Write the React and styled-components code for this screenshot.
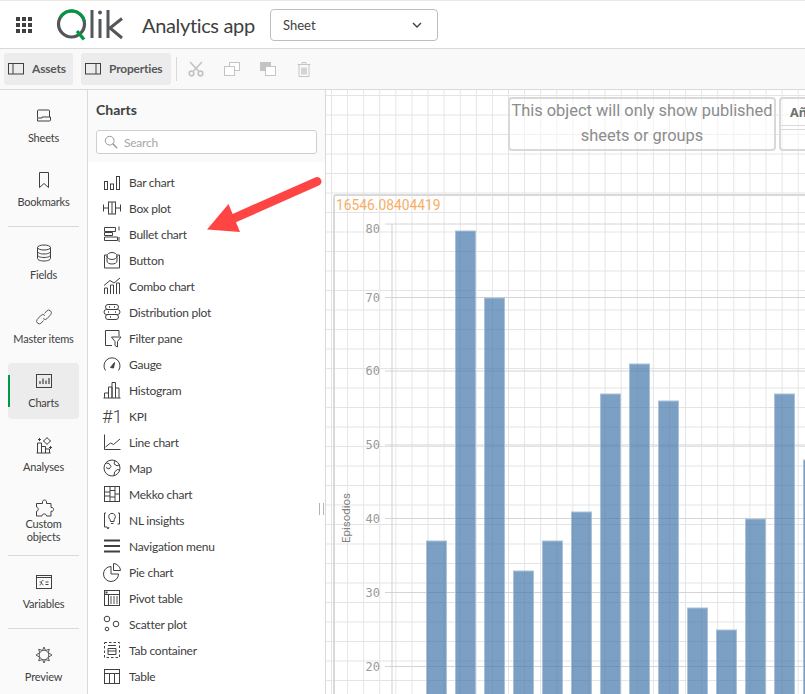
import styled, { createGlobalStyle } from "styled-components"

const GlobalStyle = createGlobalStyle`
    html, body {
        margin: 0;
        padding: 0;
        background: #fff;
    }
    * {
        box-sizing: border-box;
    }
`

const Ico = ({ children, size = 20, view = 20 }) => (
    <svg width={size} height={size} viewBox={`0 0 ${view} ${view}`} fill="none" stroke="#404040" strokeWidth="1">
        {children}
    </svg>
)

const railIcons = {
    sheets: <><path d="M3.5 12V5a1 1 0 0 1 1-1h10a1 1 0 0 1 1 1v6" /><path d="M3.5 15V13a1 1 0 0 1 1-1H8v-1h8.500v3a1 1 0 0 1-1 1H3.500z" /></>,
    bookmarks: <path d="M5.500 2.500h9v15l-4.500-4-4.500 4z" />,
    fields: <><ellipse cx="10" cy="4.500" rx="6.500" ry="2.500" /><path d="M3.500 4.500v11c0 1.400 2.900 2.500 6.500 2.500s6.500-1.100 6.500-2.500v-11" /><path d="M3.500 8.500c0 1.400 2.900 2.500 6.500 2.500s6.500-1.100 6.500-2.500M3.500 12c0 1.400 2.900 2.500 6.500 2.500s6.500-1.100 6.500-2.500" /></>,
    master: <><path d="M10.500 6.500l2.300-2.600a2.700 2.700 0 0 1 4 3.600l-3.600 4a2.700 2.700 0 0 1-4 0" stroke="#595959" /><path d="M9.500 13.500l-2.300 2.600a2.700 2.700 0 0 1-4-3.600l3.600-4a2.700 2.700 0 0 1 4 0" stroke="#595959" /></>,
    charts: <><rect x="2.500" y="3.500" width="15" height="13" /><path d="M6 13V10M9 13V7.500M12 13V9.500M15 13V7" strokeWidth="1.200" /></>,
    analyses: <><path d="M3.500 18V8h4v10M7.500 18v-6.500h4V18M11.500 18v-4h4v4M2.500 18h14" /><path d="M13 2.500l1.700 2 2 1.500-2 1.500L13 9.500l-1.700-2-2-1.500 2-1.500zM5.500 3v3M4 4.500h3M16.500 11v3M15 12.500h3" /></>,
    custom: <path d="M8.500 3.800c0-2.400 4-2.400 4 0v1.700h4.500v4h1c2 0 2 3.800 0 3.800h-1V18h-4.500c0-2.700-4.500-2.700-4.500 0H2.500v-4.700c2.300 0 2.300-4.300 0-4.300V5.500h6z" />,
    variables: <><rect x="2.500" y="3.500" width="15" height="13" /><path d="M2.500 5.500h15M11.500 10h3M11.500 12.500h3" /><path d="M5.500 13c1 .5 1.500-.5 2-3 .3-1.300 1-2 2-1.500M5.500 10h1.500c.6 0 .8 3 2.500 3" strokeWidth=".8" /></>,
    preview: <><circle cx="10" cy="10" r="4.800" stroke="#595959" /><path d="M10 2l1.500 3.500 3.800-1.300-1 3.500L18 10l-3.700 2.300 1 3.500-3.800-1.300L10 18l-1.500-3.500-3.800 1.300 1-3.500L2 10l3.700-2.300-1-3.500 3.800 1.300z" stroke="#595959" /></>,
}

const listIcons = {
    bar: <><rect x="2.500" y="9.500" width="3" height="8" /><rect x="8.500" y="12" width="3" height="5.500" /><rect x="14.500" y="4.500" width="3" height="13" /></>,
    box: <><rect x="6.500" y="4" width="7" height="12" /><path d="M10 4v12M1.500 6.500v7M1.500 10h5M18.500 6.500v7M13.500 10h5" /></>,
    bullet: <><path d="M2.500 3.500h11v4h-11zM2.500 8.500h8v3h-8zM2.500 13h13v3.500h-13zM17 2.500v4M17 13v5" /></>,
    button: <><path d="M5 5H2.500v13h15V5H15" /><ellipse cx="10" cy="6" rx="5" ry="3.500" /><path d="M5 6v5c0 1.800 2.200 3 5 3s5-1.200 5-3V6" /></>,
    combo: <><path d="M2.500 18v-6h3v6M8.500 18v-9h3v9M14.500 18V7h3v11" /><path d="M2 9.500l6-5 4 2.500 6-5" /></>,
    distribution: <><rect x="3.500" y="2.500" width="13" height="5" rx="2.500" /><rect x="2" y="7.500" width="16" height="5" rx="2.500" /><rect x="3.500" y="12.500" width="13" height="5" rx="2.500" /><path d="M7 5h1M12 5h1M6 10h1M13 10h1M8 15h1" strokeWidth="1.600" /></>,
    filter: <><path d="M17 8V2.500H3.500v15H10" /><path d="M9.500 9h9.500l-3.500 4.500V19l-2.500-1.500v-4z" /></>,
    gauge: <><path d="M3.500 16.500A8 8 0 1 1 16.500 16.500" /><path d="M8.500 13.500l4-5-1 5.500z" fill="#404040" /></>,
    histogram: <><path d="M2.500 18v-5h4v5M6.500 18V7h3.500v11M10 18V2.500h3.500V18M13.500 18V8h3.500v10M1.500 18h17" /></>,
    line: <><path d="M2.500 2.500v15h16" /><path d="M3.500 15l5-4 3 1.500 6.500-5.500" /></>,
    map: <><circle cx="10" cy="10" r="8" /><path d="M4 5l3 .5 2 3-2 2.500-3-1.500M13 2.800l-1 3 3 2 2.500-1M12 18l.5-4 3-2.500 2 .5" /></>,
    mekko: <><rect x="2.500" y="2.500" width="15" height="15" /><path d="M8 2.500v15M13 2.500v15M2.500 8h5.500M2.500 12h5.500M8 6.500h5M8 13h5M13 10h4.500" /></>,
    nl: <><path d="M4 3H2.500v14H5l1 2 1-2M16 3h1.500v11h-2" /><path d="M7 8a3.300 3.300 0 1 1 6 0c-.7 1-1 2-1 3.500H8.500C8.500 10 7.700 9 7 8z" /><path d="M9 13.500h2.500" /></>,
    nav: <path d="M2 4.500h16M2 10h16M2 15.500h16" strokeWidth="2" />,
    pie: <><path d="M9 4.500a7.500 7.500 0 1 0 7.500 7.500H9z" /><path d="M11.500 1.500a7.500 7.500 0 0 1 7 7h-7z" /></>,
    pivot: <><rect x="2.500" y="2.500" width="15" height="15" /><path d="M2.500 6.500h15M6.500 6.500v11" /><path d="M9 8v8M12 8v8M15 8v8" strokeWidth="1.200" stroke="#6f6f6f" /><rect x="3.500" y="3.500" width="2" height="2" fill="#404040" stroke="none" /></>,
    scatter: <><circle cx="5" cy="5" r="2.800" /><circle cx="14" cy="10" r="2.800" /><circle cx="5" cy="15" r="1.800" /></>,
    tab: <><path d="M2.500 2.500h15v15h-15z" strokeDasharray="2.500 2" /><path d="M6 8.500h8v6H6zM6 5.500h8M6 11h8" /></>,
    table: <><rect x="2.500" y="3.500" width="15" height="14" /><path d="M2.500 7.500h15M7.500 7.500v10M12.500 7.500v10" /></>,
}

const railItems = [
    { label: "Sheets", icon: "sheets" },
    { label: "Bookmarks", icon: "bookmarks" },
    { divider: true },
    { label: "Fields", icon: "fields" },
    { label: "Master items", icon: "master" },
    { label: "Charts", icon: "charts", active: true },
    { label: "Analyses", icon: "analyses" },
    { label: "Custom objects", icon: "custom", tight: true },
    { divider: true },
    { label: "Variables", icon: "variables" },
    { divider: true },
    { label: "Preview", icon: "preview" },
]

const chartItems = [
    ["Bar chart", "bar"], ["Box plot", "box"], ["Bullet chart", "bullet"], ["Button", "button"],
    ["Combo chart", "combo"], ["Distribution plot", "distribution"], ["Filter pane", "filter"],
    ["Gauge", "gauge"], ["Histogram", "histogram"], ["KPI", "kpi"], ["Line chart", "line"],
    ["Map", "map"], ["Mekko chart", "mekko"], ["NL insights", "nl"], ["Navigation menu", "nav"],
    ["Pie chart", "pie"], ["Pivot table", "pivot"], ["Scatter plot", "scatter"],
    ["Tab container", "tab"], ["Table", "table"],
]

// the top label sits under its line, the rest are centred on it
const ticks = [[80, 224, 9], [70, 297.500, 4], [60, 371, 4], [50, 445, 4], [40, 518.500, 4], [30, 592.500, 4], [20, 666.500, 4]]
const barTops = [541, 231, 298, 571, 541, 512, 394, 364, 401, 608, 630, 519, 394, 460]

export default function App() {
    return (
        <Page>
            <GlobalStyle />
            <Header>
                <GridButton>
                    {Array.from({ length: 9 }).map((_, i) => <i key={i} />)}
                </GridButton>
                <svg width="76" height="32" viewBox="0 0 76 32" fill="none">
                    <circle cx="15.500" cy="15" r="13" stroke="#54565a" strokeWidth="3.200" />
                    <path d="M4.300 8.500A13 13 0 0 1 28.300 12" stroke="#009845" strokeWidth="3.200" />
                    <path d="M21 22l7 8.500" stroke="#009845" strokeWidth="3.400" />
                    <path d="M36 1v28M44 10v19M52 1v28M66 9.500L54 19l12 10" stroke="#54565a" strokeWidth="3" />
                    <circle cx="44" cy="3.500" r="2" fill="#54565a" />
                </svg>
                <AppName>Analytics app</AppName>
                <SheetSelect>
                    Sheet
                    <svg width="12" height="12" viewBox="0 0 12 12" fill="none" stroke="#404040" strokeWidth="1.400"><path d="M2 4l4 4 4-4" /></svg>
                </SheetSelect>
            </Header>
            <Toolbar>
                <ToolButton $width={69}>
                    <svg width="16" height="12" viewBox="0 0 16 12" fill="none" stroke="#404040"><rect x=".5" y=".5" width="15" height="10.500" /><path d="M5 .5v10.500" /></svg>
                    <span>Assets</span>
                </ToolButton>
                <ToolButton $width={90}>
                    <svg width="16" height="12" viewBox="0 0 16 12" fill="none" stroke="#404040"><rect x=".5" y=".5" width="15" height="10.500" /><path d="M11 .5v10.500" /></svg>
                    <span>Properties</span>
                </ToolButton>
                <ToolDivider />
                <EditIcons>
                    <svg width="16" height="16" viewBox="0 0 16 16" fill="none" stroke="#c4c4c4" strokeWidth="1.700"><path d="M2 1l8.500 9M14 1L5.500 10" /><circle cx="3.500" cy="12.500" r="2.300" /><circle cx="12.500" cy="12.500" r="2.300" /></svg>
                    <svg width="16" height="16" viewBox="0 0 16 16" fill="#fff" stroke="#c4c4c4"><rect x="5.500" y="1.500" width="10" height="8" /><rect x=".5" y="5.500" width="10" height="9" /></svg>
                    <svg width="16" height="16" viewBox="0 0 16 16" fill="#fff" stroke="#c4c4c4"><rect x=".5" y="1.500" width="10" height="8" fill="#c4c4c4" /><rect x="5.500" y="5.500" width="10" height="9" /></svg>
                    <svg width="16" height="16" viewBox="0 0 16 16" fill="none" stroke="#c4c4c4"><path d="M3 3.500v12h10v-12zM1.500 3.500h13M6 3.500v-2h4v2" /><rect x="5" y="6.500" width="6" height="7" fill="#d4d4d4" stroke="none" /></svg>
                </EditIcons>
            </Toolbar>
            <Body>
                <Rail>
                    {railItems.map((item, i) => item.divider ? <RailDivider key={i} /> : (
                        <RailItem key={i} $active={item.active} $tight={item.tight}>
                            <Ico>{railIcons[item.icon]}</Ico>
                            <span>{item.label}</span>
                        </RailItem>
                    ))}
                </Rail>
                <Panel>
                    <PanelHead>
                        <PanelTitle>Charts</PanelTitle>
                        <SearchBox>
                            <svg width="14" height="14" viewBox="0 0 16 16" fill="none" stroke="#8c8c8c"><circle cx="6.500" cy="6.500" r="5" /><path d="M10 10l5 5" strokeWidth="1.500" /></svg>
                            Search
                        </SearchBox>
                    </PanelHead>
                    <ChartList>
                        {chartItems.map(([label, icon]) => (
                            <ChartRow key={label}>
                                {icon === "kpi" ? <KpiGlyph>#1</KpiGlyph> : <Ico>{listIcons[icon]}</Ico>}
                                <span>{label}</span>
                            </ChartRow>
                        ))}
                    </ChartList>
                    <Handle />
                </Panel>
                <Canvas>
                    <TopObjects>
                        <NoticeBox>This object will only show published sheets or groups</NoticeBox>
                        <FilterBox><b>Añ</b><i /></FilterBox>
                    </TopObjects>
                    <ChartBox>
                        <ChartValue>16546.08404419</ChartValue>
                        <AxisTitle>Episodios</AxisTitle>
                        <svg width="472" height="500" viewBox="333 194 472 500">
                            {ticks.map(([value, y, drop]) => (
                                <g key={value}>
                                    <line x1="385" x2="805" y1={y} y2={y} stroke="#d4d4d4" />
                                    <text x="380" y={y + drop} textAnchor="end" fontFamily="'DejaVu Sans Mono', monospace" fontSize="12" fill="#9a9a9a">{value}</text>
                                </g>
                            ))}
                            <line x1="392" x2="392" y1="224" y2="694" stroke="#cfcfcf" />
                            {barTops.map((top, i) => (
                                <rect key={i} x={426.500 + i * 29} y={top} width="20" height={694 - top + 2} fill="#4477aa" fillOpacity=".7" stroke="#a9c1da" />
                            ))}
                        </svg>
                    </ChartBox>
                </Canvas>
            </Body>
            <Arrow width="135" height="80" viewBox="195 165 135 80">
                <path d="M317 181.500L230 220" stroke="#ff4444" strokeWidth="9" strokeLinecap="round" />
                <path d="M207 229.500L228.500 204L240 232z" fill="#ff4444" />
            </Arrow>
        </Page>
    )
}

const Page = styled.div`
    position: relative;
    width: 805px;
    height: 694px;
    overflow: hidden;
    display: flex;
    flex-direction: column;
    font-family: "Lato", "Noto Sans", sans-serif;
    color: #404040;
`

const Header = styled.header`
    height: 49px;
    flex: none;
    display: flex;
    align-items: center;
    padding: 1px 0 0 16px;
    background: #fff;
    border-top: 1px solid #efe9e6;
    border-bottom: 1px solid #d9d9d9;

    > svg {
        margin-left: 24px;
    }
`

const GridButton = styled.div`
    width: 16px;
    height: 16px;
    display: grid;
    grid-template-columns: repeat(3, 4px);
    grid-auto-rows: 4px;
    gap: 2px;

    i {
        background: #404040;
    }
`

const AppName = styled.div`
    margin-left: 10px;
    font-size: 20px;
    letter-spacing: -.35px;
    color: #404040;
    width: 128px;
    white-space: nowrap;
`

const SheetSelect = styled.div`
    width: 168px;
    height: 32px;
    border: 1px solid #bdbdbd;
    border-radius: 4px;
    display: flex;
    align-items: center;
    justify-content: space-between;
    padding: 0 14px 0 12px;
    font-size: 13px;
`

const Toolbar = styled.div`
    height: 41px;
    flex: none;
    display: flex;
    align-items: center;
    gap: 8px;
    padding: 0 4px;
    background: #f9f9f9;
    border-bottom: 1px solid #d9d9d9;
`

const ToolButton = styled.div`
    width: ${p => p.$width}px;
    height: 32px;
    display: flex;
    align-items: center;
    gap: 8px;
    padding-left: 4px;
    background: #ececec;
    border-radius: 3px;
    font-size: 12px;
    font-weight: 700;
    letter-spacing: -.2px;
    color: #595959;
    white-space: nowrap;

    span {
        margin-top: -2px;
    }
`

const ToolDivider = styled.div`
    width: 1px;
    height: 24px;
    background: #d9d9d9;
    margin-left: -3px;
`

const EditIcons = styled.div`
    display: flex;
    align-items: center;
    gap: 20px;
    margin-left: 3px;
`

const Body = styled.div`
    flex: 1;
    display: flex;
    min-height: 0;
`

const Rail = styled.nav`
    width: 88px;
    flex: none;
    display: flex;
    flex-direction: column;
    gap: 8px;
    padding: 8px 8px 0;
    background: #fafafa;
    border-right: 1px solid #d9d9d9;
`

const RailDivider = styled.div`
    height: 1px;
    flex: none;
    background: #d9d9d9;
`

const RailItem = styled.div`
    position: relative;
    height: 56px;
    flex: none;
    display: flex;
    flex-direction: column;
    align-items: center;
    padding-top: ${p => p.$tight ? 7 : 8}px;
    border-radius: 4px;
    background: ${p => p.$active ? "#ececec" : "transparent"};
    font-size: 11px;
    letter-spacing: -.2px;
    line-height: 13px;
    text-align: center;

    span {
        margin-top: ${p => p.$tight ? -1 : 5}px;
    }

    &::before {
        content: "";
        display: ${p => p.$active ? "block" : "none"};
        position: absolute;
        left: 0;
        top: 12px;
        width: 2px;
        height: 32px;
        background: #009845;
    }
`

const Panel = styled.aside`
    position: relative;
    width: 238px;
    flex: none;
    display: flex;
    flex-direction: column;
    background: #fff;
    border-right: 1px solid #d9d9d9;
`

const PanelHead = styled.div`
    height: 72px;
    flex: none;
    padding: 11px 8px 0;
    background: #fafafa;
`

const PanelTitle = styled.div`
    font-size: 14px;
    font-weight: 700;
    line-height: 17px;
    margin-bottom: 12px;
`

const SearchBox = styled.div`
    width: 221px;
    height: 24px;
    display: flex;
    align-items: center;
    gap: 6px;
    padding-left: 7px;
    background: #fff;
    border: 1px solid #cfcfcf;
    border-radius: 3px;
    font-size: 12px;
    letter-spacing: -.25px;
    color: #a6a6a6;
`

const ChartList = styled.div`
    display: flex;
    flex-direction: column;
    padding: 7px 0 0 14px;
`

const ChartRow = styled.div`
    height: 26px;
    flex: none;
    display: flex;
    align-items: center;
    gap: 7px;
    font-size: 12px;
    letter-spacing: -.25px;
    color: #404040;
    white-space: nowrap;
`

const KpiGlyph = styled.span`
    width: 20px;
    font-family: "Roboto", sans-serif;
    font-weight: 300;
    font-size: 18px;
    letter-spacing: 0;
    text-align: center;
    color: #404040;
`

const Handle = styled.div`
    position: absolute;
    left: 231px;
    top: 413px;
    width: 5px;
    height: 12px;
    border-left: 1px solid #b4b4b4;
    border-right: 1px solid #b4b4b4;
`

const Canvas = styled.main`
    flex: 1;
    min-width: 0;
    overflow: hidden;
    display: flex;
    flex-direction: column;
    padding: 7px 0 0 7px;
    background-color: #fff;
    background-image:
        linear-gradient(to right, #e4e4e4 1px, transparent 1px),
        linear-gradient(to bottom, #e4e4e4 1px, transparent 1px);
    background-size: 16.100px 19.500px;
    background-position: 5px 5px;
`

const TopObjects = styled.div`
    display: flex;
    gap: 3px;
    padding-left: 175px;
`

const NoticeBox = styled.div`
    width: 268px;
    height: 54px;
    flex: none;
    border: 2px solid #d9d9d9;
    border-radius: 4px;
    text-align: center;
    font-family: "Roboto", sans-serif;
    font-size: 16.400px;
    line-height: 24.500px;
    color: #8c8c8c;
    background: rgba(255, 255, 255, .5);
`

const FilterBox = styled.div`
    width: 60px;
    height: 54px;
    flex: none;
    padding: 5px 0 0 9px;
    border: 2px solid #d9d9d9;
    border-radius: 4px;
    font-family: "Noto Sans", sans-serif;
    font-size: 12.500px;
    line-height: 18px;
    color: #6f6f6f;
    background: rgba(255, 255, 255, .5);

    i {
        display: block;
        height: 5px;
        margin: 3px 0 0 -9px;
        border-top: 1px solid #d9d9d9;
        border-bottom: 1px solid #d9d9d9;
    }
`

const ChartBox = styled.section`
    position: relative;
    width: 480px;
    margin-top: 43px;
    flex: 1;
    border-top: 2px solid #d9d9d9;
    border-left: 2px solid #d9d9d9;
    border-radius: 3px 0 0 0;

    > svg {
        position: absolute;
        left: -2px;
        top: -2px;
    }
`

const ChartValue = styled.div`
    position: absolute;
    left: 1px;
    top: 1px;
    z-index: 1;
    font-family: "Roboto", sans-serif;
    font-size: 13.800px;
    color: #f6ae66;
`

const AxisTitle = styled.div`
    position: absolute;
    left: 4px;
    top: 297px;
    z-index: 1;
    writing-mode: vertical-rl;
    transform: rotate(180deg);
    font-family: "Roboto", sans-serif;
    font-size: 11.500px;
    color: #808080;
`

const Arrow = styled.svg`
    position: absolute;
    left: 195px;
    top: 165px;
`
